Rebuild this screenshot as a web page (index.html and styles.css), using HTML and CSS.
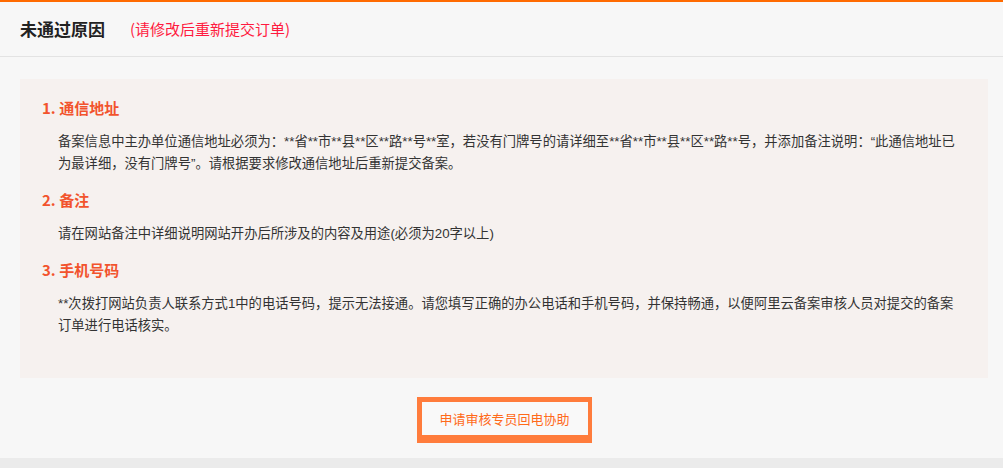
FILE: index.html
```html
<!DOCTYPE html>
<html lang="zh-CN">
<head>
<meta charset="utf-8">
<title>未通过原因</title>
<link rel="stylesheet" href="styles.css">
</head>
<body>
<div class="page">
  <div class="topbar"></div>
  <header class="header">
    <h1 class="title">未通过原因</h1>
    <span class="note">(请修改后重新提交订单)</span>
  </header>
  <main class="main">
    <section class="reasons">
      <div class="item">
        <h2 class="item-title">1. 通信地址</h2>
        <p class="item-text">备案信息中主办单位通信地址必须为：**省**市**县**区**路**号**室，若没有门牌号的请详细至**省**市**县**区**路**号，并添加备注说明：“此通信地址已为最详细，没有门牌号”。请根据要求修改通信地址后重新提交备案。</p>
      </div>
      <div class="item">
        <h2 class="item-title">2. 备注</h2>
        <p class="item-text">请在网站备注中详细说明网站开办后所涉及的内容及用途(必须为20字以上)</p>
      </div>
      <div class="item">
        <h2 class="item-title">3. 手机号码</h2>
        <p class="item-text">**次拨打网站负责人联系方式1中的电话号码，提示无法接通。请您填写正确的办公电话和手机号码，并保持畅通，以便阿里云备案审核人员对提交的备案订单进行电话核实。</p>
      </div>
    </section>
    <div class="actions">
      <button class="btn" type="button">申请审核专员回电协助</button>
    </div>
  </main>
  <div class="footer"></div>
</div>
</body>
</html>
```

FILE: styles.css
```css
html, body {
  margin: 0;
  padding: 0;
}
body {
  background: #f7f7f7;
  font-family: "Noto Sans CJK SC", "Noto Sans", sans-serif;
  color: #333;
}
.page {
  display: flex;
  flex-direction: column;
  height: 468px;
  overflow: hidden;
}
.topbar {
  height: 2px;
  background: #ff6a00;
}
.header {
  display: flex;
  align-items: center;
  padding-left: 20px;
  border-bottom: 1px solid #e3e3e3;
  box-sizing: border-box;
  height: 55px;
}
.title {
  margin: 0;
  font-size: 17px;
  font-weight: bold;
  color: #222;
  line-height: 24px;
}
.note {
  margin-left: 25px;
  font-size: 15px;
  color: #ff1a40;
  line-height: 24px;
}
.main {
  padding: 22px 15px 0 20px;
  flex: 1;
}
.reasons {
  background: #f6f1ef;
  padding: 18px 22px 26px;
  height: 299px;
  box-sizing: border-box;
}
.item {
  margin-bottom: 14px;
}
.item-title {
  margin: 0 0 12px;
  font-size: 15px;
  font-weight: bold;
  line-height: 22px;
  color: #f2532d;
}
.item-text {
  margin: 0;
  padding-left: 16px;
  padding-right: 4px;
  font-family: "Liberation Sans", "Noto Sans CJK SC", sans-serif;
  font-size: 13.3px;
  line-height: 22px;
  color: #333;
}
.actions {
  display: flex;
  justify-content: center;
  padding-top: 19px;
}
.btn {
  width: 175px;
  height: 46px;
  box-sizing: border-box;
  background: #f9f9f9;
  border: 5px solid #ff7c3c;
  border-bottom-width: 8px;
  border-right-width: 4px;
  color: #ff6a1a;
  font-family: "Noto Sans CJK SC", "Noto Sans", sans-serif;
  font-size: 13px;
  padding: 0;
  cursor: pointer;
}
.footer {
  height: 10px;
  background: #ebebeb;
}
```
